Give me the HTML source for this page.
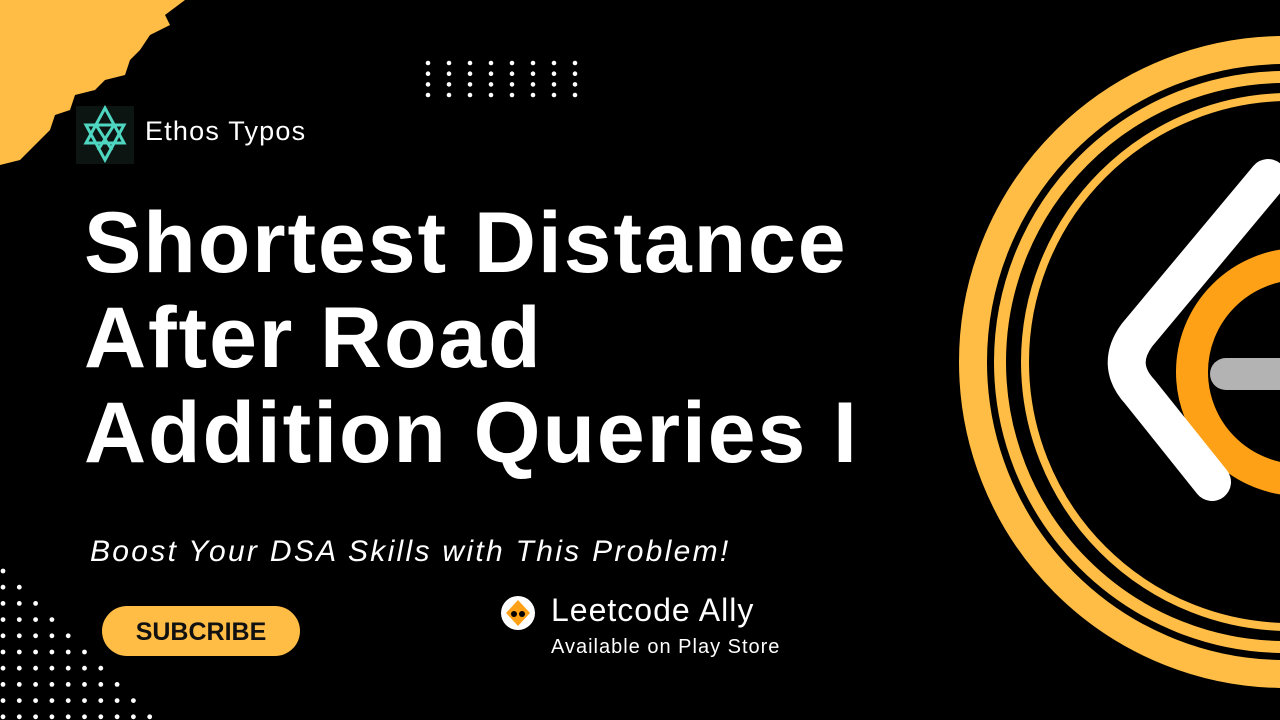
<!DOCTYPE html>
<html><head><meta charset="utf-8"><style>
body{margin:0;width:1280px;height:720px;background:#000;overflow:hidden;position:relative;font-family:"Liberation Sans",sans-serif;color:#fff}
.t{position:absolute;white-space:nowrap}
h1{position:absolute;left:84px;top:196px;margin:0;font-size:86px;line-height:95px;font-weight:bold;letter-spacing:1.9px}
</style></head><body>
<svg width="1280" height="720" style="position:absolute;left:0;top:0">
<path d="M0 0 L185 0 L165 15 L170 25 L150 35 L140 50 L130 60 L125 75 L105 80 L95 90 L75 95 L70 110 L55 115 L50 130 L40 140 L30 150 L20 160 L0 165 Z" fill="#FFBD45"/>
<g fill="#fff">
<g id="r"><circle cx="428" cy="63" r="2.3"/><circle cx="449" cy="63" r="2.3"/><circle cx="470" cy="63" r="2.3"/><circle cx="491" cy="63" r="2.3"/><circle cx="512" cy="63" r="2.3"/><circle cx="533" cy="63" r="2.3"/><circle cx="554" cy="63" r="2.3"/><circle cx="575" cy="63" r="2.3"/></g>
<use href="#r" y="10.7"/><use href="#r" y="21.4"/><use href="#r" y="32"/>
</g>
<g fill="#fff" id="tri"></g>
<circle cx="1285" cy="362" r="312" fill="none" stroke="#FFBD45" stroke-width="28"/>
<circle cx="1285" cy="362" r="285" fill="none" stroke="#FFBD45" stroke-width="12"/>
<circle cx="1290" cy="362" r="265" fill="none" stroke="#FFBD45" stroke-width="8"/>
<circle cx="1300" cy="372" r="108" fill="none" stroke="#FFA116" stroke-width="32"/>
<path d="M1268 178 L1137 335 Q1115 365 1140 392 L1212 482" fill="none" stroke="#fff" stroke-width="38" stroke-linecap="round" stroke-linejoin="round"/>
<line x1="1226" y1="374" x2="1290" y2="374" stroke="#B3B3B3" stroke-width="32" stroke-linecap="round"/>
<rect x="76" y="106" width="58" height="58" fill="#0d1512"/>
<g fill="none" stroke="#4fd6c0" stroke-width="3">
<path d="M105 108 L124 143 L86 143 Z"/><path d="M105 160 L124 125 L86 125 Z"/><path d="M96 125 L112 150 M114 125 L98 150"/>
</g>
<circle cx="518" cy="613" r="17" fill="#fff"/>
<path d="M518 600 L530 613 L518 626 L506 613 Z" fill="#FFA116"/>
<circle cx="514" cy="614" r="3" fill="#000"/><circle cx="522" cy="614" r="3" fill="#000"/>
</svg>
<script>
var g=document.getElementById('tri'),s='';
for(var i=0;i<10;i++){for(var j=0;j<=i;j++){s+='<circle cx="'+(3+j*16.3)+'" cy="'+(571+i*16.2)+'" r="2.4"/>';}}
g.innerHTML=s;
</script>
<div class="t" style="left:145px;top:116px;font-size:27px;letter-spacing:1.2px">Ethos Typos</div>
<h1>Shortest Distance<br>After Road<br>Addition Queries I</h1>
<div class="t" style="left:90px;top:535px;font-size:30px;font-style:italic;letter-spacing:2.3px">Boost Your DSA Skills with This Problem!</div>
<div class="t" style="left:102px;top:606px;width:198px;height:50px;border-radius:25px;background:#FFBD45;color:#111;font-weight:bold;font-size:25px;line-height:52px;text-align:center">SUBCRIBE</div>
<div class="t" style="left:551px;top:592px;font-size:32px;letter-spacing:1px">Leetcode Ally</div>
<div class="t" style="left:551px;top:636px;font-size:20px;letter-spacing:1px">Available on Play Store</div>
</body></html>
